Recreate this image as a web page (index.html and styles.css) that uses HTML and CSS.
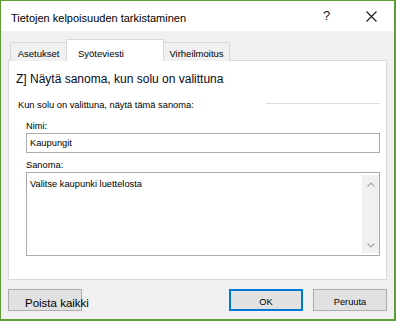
FILE: index.html
```html
<!DOCTYPE html>
<html lang="fi">
<head>
<meta charset="utf-8">
<title>Tietojen kelpoisuuden tarkistaminen</title>
<link rel="stylesheet" href="styles.css">
</head>
<body>
	<div class="dialog">
		<div class="titlebar">
			<span class="title">Tietojen kelpoisuuden tarkistaminen</span>
			<span class="help">?</span>
			<svg class="close" width="11" height="11" viewBox="0 0 11 11">
				<path d="M0.5 0.5 L10.5 10.5 M10.5 0.5 L0.5 10.5" stroke="#1a1a1a" stroke-width="1.1" fill="none"/>
			</svg>
		</div>

		<div class="tabs">
			<div class="tab tab-first">Asetukset</div>
			<div class="tab active">Syöteviesti</div>
			<div class="tab tab-last">Virheilmoitus</div>
		</div>

		<div class="panel">
			<div class="heading">Z] Näytä sanoma, kun solu on valittuna</div>

			<div class="grouprow">
				<span>Kun solu on valittuna, näytä tämä sanoma:</span>
				<span class="rule"></span>
			</div>

			<div class="fieldlabel">Nimi:</div>
			<div class="input">Kaupungit</div>

			<div class="fieldlabel">Sanoma:</div>
			<div class="textarea">
				<div class="text">Valitse kaupunki luettelosta</div>
				<div class="scrollbar">
					<svg width="8" height="5" viewBox="0 0 8 5"><polyline points="0.5,4.5 4,1 7.5,4.5" fill="none" stroke="#a8a8a8" stroke-width="1.2"/></svg>
					<svg width="8" height="5" viewBox="0 0 8 5"><polyline points="0.5,0.5 4,4 7.5,0.5" fill="none" stroke="#a8a8a8" stroke-width="1.2"/></svg>
				</div>
			</div>
		</div>

		<div class="buttons">
			<div class="btn btn-clear">Poista kaikki</div>
			<div class="btn btn-ok">OK</div>
			<div class="btn btn-cancel">Peruuta</div>
		</div>
	</div>
</body>
</html>
```

FILE: styles.css
```css
body {
	margin: 0;
	font-family: "Liberation Sans", Arial, sans-serif;
	font-size: 9.3px;
	line-height: 12px;
	color: #000;
}

.dialog {
	width: 396px;
	height: 321px;
	box-sizing: border-box;
	border-style: solid;
	border-color: #5f9e35;
	border-width: 1px 2px 2px 1px;
	background: #f0f0f0;
}

/* title bar */
.titlebar {
	height: 30px;
	background: #fff;
	display: flex;
	align-items: flex-start;
	padding-left: 10px;
}

.title {
	font-size: 11px;
	line-height: 14px;
	margin-top: 10px;
	white-space: nowrap;
}

.help {
	font-size: 13px;
	line-height: 14px;
	width: 7px;
	margin-top: 8px;
	margin-left: auto;
	color: #1a1a1a;
}

.close {
	margin-top: 10px;
	margin-left: 36px;
	margin-right: 17px;
}

/* tabs */
.tabs {
	display: flex;
	align-items: flex-end;
	height: 22px;
	margin-top: 8px;
	padding-left: 9px;
}

.tab {
	box-sizing: border-box;
	height: 19px;
	padding-top: 5px;
	font-size: 9.5px;
	text-align: center;
	white-space: nowrap;
	background: #f0f0f0;
	border: 1px solid #d9d9d9;
	border-bottom: none;
}

.tab-first {
	width: 56px;
	border-right: none;
}

.tab.active {
	position: relative;
	z-index: 1;
	width: 98px;
	height: 22px;
	padding-top: 8px;
	padding-left: 11px;
	text-align: left;
	background: #fff;
}

.tab-last {
	width: 66px;
	border-left: none;
}

/* panel */
.panel {
	width: 379px;
	height: 220px;
	box-sizing: border-box;
	margin-top: -1px;
	margin-left: 7px;
	padding-right: 6px;
	background: #fff;
	border: 1px solid #d9d9d9;
}

.heading {
	font-size: 12px;
	line-height: 15px;
	margin-top: 11px;
	margin-left: 7px;
	color: #050a1e;
}

.grouprow {
	display: flex;
	margin-top: 12px;
	margin-left: 9px;
	white-space: nowrap;
}

.grouprow .rule {
	margin-left: auto;
	margin-top: 4px;
	width: 114px;
	height: 1px;
	background: #dcdcdc;
}

.fieldlabel {
	margin-left: 17px;
	margin-top: 9px;
}

.fieldlabel + .textarea {
	margin-top: 1px;
}

.input {
	box-sizing: border-box;
	height: 20px;
	margin-top: 1px;
	margin-left: 17px;
	padding: 3px 0 0 3px;
	border: 1px solid #ababab;
}

.input + .fieldlabel {
	margin-top: 6px;
}

.textarea {
	box-sizing: border-box;
	display: flex;
	height: 84px;
	margin-left: 17px;
	border: 1px solid #ababab;
}

.textarea .text {
	flex: 1;
	padding: 5px 0 0 3px;
}

.scrollbar {
	width: 17px;
	margin: 2px 0;
	background: #f0f0f0;
	display: flex;
	flex-direction: column;
	justify-content: space-between;
	align-items: center;
	padding: 7px 0 5px;
	box-sizing: border-box;
}

/* buttons */
.buttons {
	display: flex;
	margin-top: 9px;
	margin-left: 7px;
}

.btn {
	box-sizing: border-box;
	width: 74px;
	height: 22px;
	padding-top: 6px;
	text-align: center;
	white-space: nowrap;
	background: #e1e1e1;
	border: 1px solid #adadad;
}

.btn-clear {
	font-size: 11.5px;
	line-height: 14px;
	text-align: left;
	padding-left: 16px;
	padding-top: 6px;
}

.btn-ok {
	margin-left: auto;
	padding-top: 5px;
	border: 2px solid #0078d7;
}

.btn-cancel {
	margin-left: 10px;
	margin-right: 7px;
}
```
